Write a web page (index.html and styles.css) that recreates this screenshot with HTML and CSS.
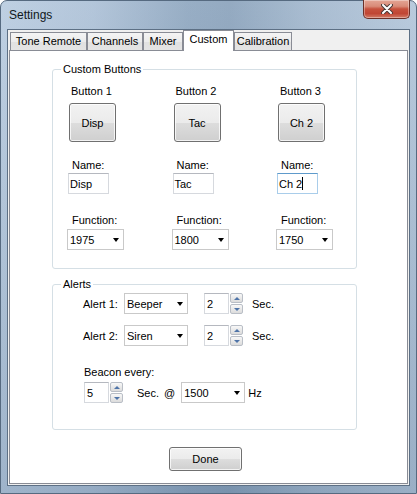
FILE: index.html
```html
<!DOCTYPE html>
<html>
<head>
<meta charset="utf-8">
<title>Settings</title>
<link rel="stylesheet" href="styles.css">
</head>
<body>
<div class="window">
  <div class="titlebar">
    <span class="title">Settings</span>
    <div class="close">
      <svg width="12" height="10" viewBox="0 0 12 10">
        <path d="M2 1 L10 9 M10 1 L2 9" stroke="#4a3a38" stroke-width="4" stroke-linecap="round" fill="none"/>
        <path d="M2 1 L10 9 M10 1 L2 9" stroke="#ffffff" stroke-width="2" stroke-linecap="round" fill="none"/>
      </svg>
    </div>
  </div>
  <div class="client">
    <div class="tabs">
      <div class="tab t-tone">Tone Remote</div>
      <div class="tab t-chan">Channels</div>
      <div class="tab t-mix">Mixer</div>
      <div class="tab t-cust selected">Custom</div>
      <div class="tab t-cal">Calibration</div>
    </div>
    <div class="panel">
      <fieldset class="group g-custom">
        <legend>Custom Buttons</legend>
        <div class="cols">
          <div class="col">
            <span class="lbl btnlbl">Button 1</span>
            <div class="pbtn big">Disp</div>
            <span class="lbl namelbl">Name:</span>
            <div class="textbox name">Disp</div>
            <span class="lbl fnlbl">Function:</span>
            <div class="combo fn"><span>1975</span><i class="arrow"></i></div>
          </div>
          <div class="col">
            <span class="lbl btnlbl">Button 2</span>
            <div class="pbtn big">Tac</div>
            <span class="lbl namelbl">Name:</span>
            <div class="textbox name">Tac</div>
            <span class="lbl fnlbl">Function:</span>
            <div class="combo fn"><span>1800</span><i class="arrow"></i></div>
          </div>
          <div class="col">
            <span class="lbl btnlbl">Button 3</span>
            <div class="pbtn big">Ch 2</div>
            <span class="lbl namelbl">Name:</span>
            <div class="textbox name focused">Ch 2<span class="caret"></span></div>
            <span class="lbl fnlbl">Function:</span>
            <div class="combo fn"><span>1750</span><i class="arrow"></i></div>
          </div>
        </div>
      </fieldset>
      <fieldset class="group g-alerts">
        <legend>Alerts</legend>
        <div class="alerts-body">
          <div class="arow">
            <span class="alabel">Alert 1:</span>
            <div class="combo wide"><span>Beeper</span><i class="arrow"></i></div>
            <div class="spin sp-alert">
              <div class="textbox num">2</div>
              <div class="updown"><b class="ud up"><i></i></b><b class="ud dn"><i></i></b></div>
            </div>
            <span class="sec">Sec.</span>
          </div>
          <div class="arow row2">
            <span class="alabel">Alert 2:</span>
            <div class="combo wide"><span>Siren</span><i class="arrow"></i></div>
            <div class="spin sp-alert">
              <div class="textbox num">2</div>
              <div class="updown"><b class="ud up"><i></i></b><b class="ud dn"><i></i></b></div>
            </div>
            <span class="sec">Sec.</span>
          </div>
          <div class="lbl beaconlbl">Beacon every:</div>
          <div class="arow beacon">
            <div class="spin">
              <div class="textbox num">5</div>
              <div class="updown"><b class="ud up"><i></i></b><b class="ud dn"><i></i></b></div>
            </div>
            <span class="bsec">Sec.</span>
            <span class="at">@</span>
            <div class="combo wide hz"><span>1500</span><i class="arrow"></i></div>
            <span class="hzlbl">Hz</span>
          </div>
        </div>
      </fieldset>
      <div class="pbtn done">Done</div>
    </div>
  </div>
</div>
</body>
</html>
```

FILE: styles.css
```css
html, body {
  margin: 0;
  padding: 0;
  background: #ffffff;
}

body {
  font-family: "Liberation Sans", Arial, sans-serif;
  font-size: 11px;
  color: #000;
}

.window {
  width: 417px;
  height: 494px;
  box-sizing: border-box;
  border: 1px solid #566a80;
  border-radius: 7px 7px 0 0;
  padding: 0 6px 7px 6px;
  display: flex;
  flex-direction: column;
  background:
    linear-gradient(180deg, rgba(255,255,255,0.08) 0%, rgba(40,70,105,0.18) 100%),
    linear-gradient(90deg, #b9cce0 0%, #adc1d7 22%, #8fa7c0 45%, #8ba3bc 55%, #a3b8ce 75%, #b3c6da 100%);
}

.titlebar {
  height: 28px;
  display: flex;
  justify-content: space-between;
  align-items: flex-start;
}

.title {
  padding-left: 2px;
  line-height: 28px;
  font-size: 12px;
  color: #101820;
}

.close {
  width: 47px;
  height: 19px;
  box-sizing: border-box;
  margin-top: -1px;
  border: 1px solid #6b3028;
  border-top: none;
  border-radius: 0 0 5px 5px;
  background: linear-gradient(180deg, #e3a595 0%, #d98b78 35%, #c6513d 50%, #c04634 75%, #d27b66 100%);
  box-shadow: inset 0 0 0 1px rgba(255,255,255,0.35);
  display: flex;
  align-items: center;
  justify-content: center;
}

.client {
  flex: 1;
  background: #f0f0f0;
  border: 1px solid #5d7085;
  display: flex;
  flex-direction: column;
}

.tabs {
  height: 20px;
  padding-left: 2px;
  display: flex;
  align-items: flex-end;
  position: relative;
  z-index: 1;
}

.tab {
  height: 18px;
  box-sizing: border-box;
  border: 1px solid #898c95;
  border-bottom: none;
  background: linear-gradient(180deg, #f4f4f4 0%, #ececec 50%, #e1e1e1 52%, #e4e4e4 100%);
  text-align: center;
  line-height: 17px;
  font-size: 11px;
}

.t-tone { width: 77px; }
.t-chan { width: 56px; }
.t-mix { width: 40px; }
.t-cust { width: 51px; }
.t-cal { width: 58px; }

.tab.selected {
  height: 21px;
  margin-bottom: -1px;
  background: #ffffff;
}

.panel {
  flex: 1;
  margin: 0 1px 1px 1px;
  border: 1px solid #898c95;
  background: #ffffff;
  padding-left: 42px;
  display: flex;
  flex-direction: column;
  align-items: flex-start;
}

.group {
  margin: 0;
  padding: 0;
  width: 305px;
  box-sizing: border-box;
  border: 1px solid #d5dfe5;
  border-radius: 3px;
  min-width: 0;
}

.group legend {
  padding: 0 2px;
  margin-left: 8px;
  line-height: 12px;
  font-size: 11px;
}

.g-custom {
  margin-top: 12px;
}

.cols {
  display: grid;
  grid-template-columns: repeat(3, 104.5px);
  padding: 10px 0 18px 14px;
}

.col {
  display: flex;
  flex-direction: column;
  align-items: flex-start;
}

.lbl {
  line-height: 13px;
}

.btnlbl {
  margin-left: 4px;
}

.pbtn {
  box-sizing: border-box;
  border: 1px solid #707070;
  border-radius: 3px;
  background: linear-gradient(180deg, #f2f2f2 0%, #ebebeb 50%, #dddddd 51%, #cfcfcf 100%);
  box-shadow: inset 0 0 0 1px rgba(255,255,255,0.75);
  display: flex;
  align-items: center;
  justify-content: center;
  font-size: 11px;
}

.pbtn.big {
  margin-top: 5px;
  margin-left: 2px;
  width: 47px;
  height: 39px;
}

.namelbl {
  margin-top: 17px;
  margin-left: 5px;
}

.textbox {
  box-sizing: border-box;
  height: 21px;
  border: 1px solid #d6d9de;
  border-top-color: #b5b8bf;
  background: #fff;
  padding-left: 1px;
  display: flex;
  align-items: center;
  font-size: 11px;
}

.textbox.name {
  margin-top: 1px;
  margin-left: 1px;
  width: 41px;
}

.textbox.focused {
  border-color: #a9cdea;
  border-top-color: #5e9acb;
}

.caret {
  display: inline-block;
  width: 1px;
  height: 13px;
  background: #000;
  margin-left: 0;
}

.fnlbl {
  margin-top: 20px;
  margin-left: 5px;
}

.combo {
  box-sizing: border-box;
  height: 21px;
  border: 1px solid #c9c9c9;
  background: #fff;
  padding: 0 4px 0 2px;
  display: flex;
  align-items: center;
  justify-content: space-between;
  font-size: 11px;
}

.combo.fn {
  margin-top: 2px;
  width: 57px;
}

.combo.wide {
  width: 64px;
}

.arrow {
  width: 0;
  height: 0;
  border-left: 3.5px solid transparent;
  border-right: 3.5px solid transparent;
  border-top: 4px solid #000;
  margin-top: 1px;
}

.g-alerts {
  margin-top: 9px;
}

.alerts-body {
  padding: 3px 0 26px 30px;
}

.arow {
  display: flex;
  align-items: center;
  height: 21px;
}

.row2 {
  margin-top: 11px;
}

.alabel {
  width: 41px;
}

.spin {
  display: flex;
  align-items: stretch;
  height: 21px;
}

.sp-alert {
  margin-left: 16px;
}

.textbox.num {
  width: 25px;
  padding-left: 2px;
}

.updown {
  margin-left: 1px;
  width: 13px;
  display: flex;
  flex-direction: column;
  justify-content: space-between;
}

.ud {
  box-sizing: border-box;
  height: 10px;
  border: 1px solid #b9bec6;
  border-radius: 2px;
  background: linear-gradient(180deg, #f8f8f8 0%, #e9e9e9 50%, #dcdcdc 100%);
  display: flex;
  align-items: center;
  justify-content: center;
}

.ud i {
  width: 0;
  height: 0;
  border-left: 3px solid transparent;
  border-right: 3px solid transparent;
}

.up i {
  border-bottom: 3px solid #4f74a8;
}

.dn i {
  border-top: 3px solid #4f74a8;
}

.sec {
  margin-left: 9px;
}

.beaconlbl {
  margin-top: 20px;
  margin-left: 1px;
}

.beacon {
  margin-top: 3px;
  margin-left: 1px;
}

.bsec {
  margin-left: 14px;
}

.at {
  margin-left: 5px;
}

.hz {
  margin-left: 6px;
}

.hzlbl {
  margin-left: 3px;
}

.pbtn.done {
  margin-top: 17px;
  margin-left: 117px;
  width: 73px;
  height: 24px;
}
```
